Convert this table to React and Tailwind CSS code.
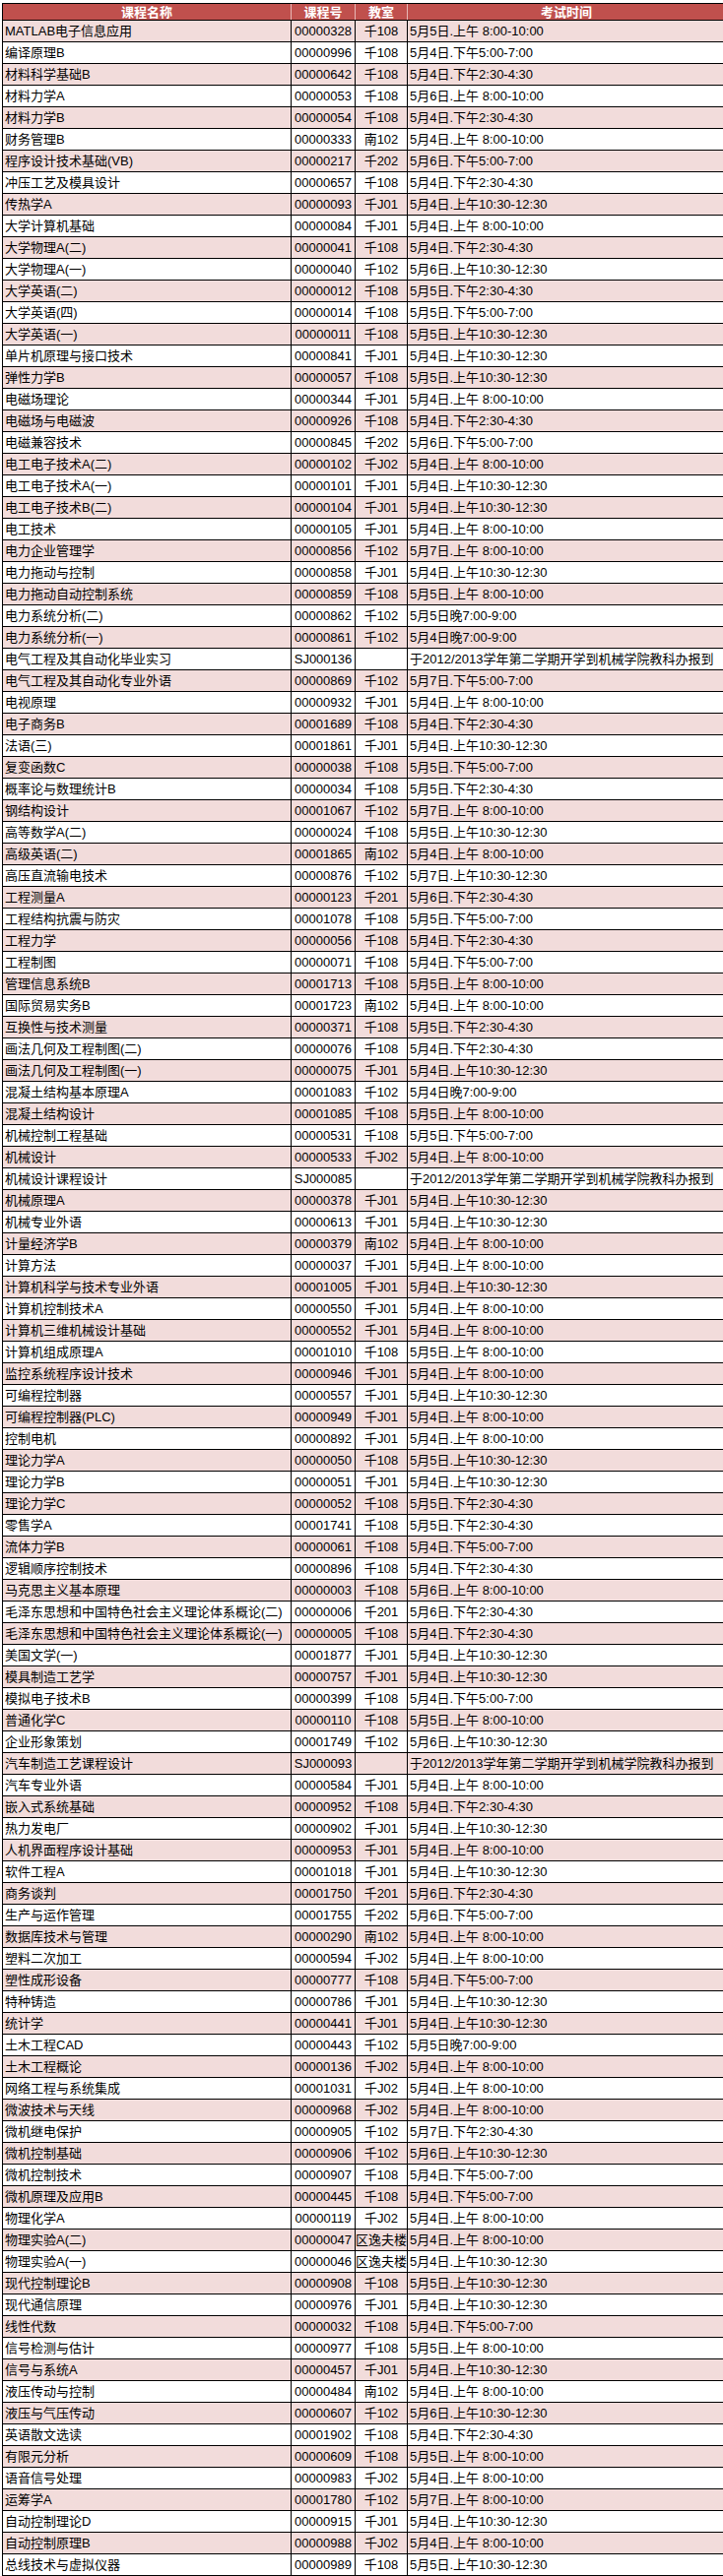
import React from 'react';

// [name, code, room, time]
const rows = [
    ['MATLAB电子信息应用', '00000328', '千108', '5月5日.上午 8:00-10:00'],
    ['编译原理B', '00000996', '千108', '5月4日.下午5:00-7:00'],
    ['材料科学基础B', '00000642', '千108', '5月4日.下午2:30-4:30'],
    ['材料力学A', '00000053', '千108', '5月6日.上午 8:00-10:00'],
    ['材料力学B', '00000054', '千108', '5月4日.下午2:30-4:30'],
    ['财务管理B', '00000333', '南102', '5月4日.上午 8:00-10:00'],
    ['程序设计技术基础(VB)', '00000217', '千202', '5月6日.下午5:00-7:00'],
    ['冲压工艺及模具设计', '00000657', '千108', '5月4日.下午2:30-4:30'],
    ['传热学A', '00000093', '千J01', '5月4日.上午10:30-12:30'],
    ['大学计算机基础', '00000084', '千J01', '5月4日.上午 8:00-10:00'],
    ['大学物理A(二)', '00000041', '千108', '5月4日.下午2:30-4:30'],
    ['大学物理A(一)', '00000040', '千102', '5月6日.上午10:30-12:30'],
    ['大学英语(二)', '00000012', '千108', '5月5日.下午2:30-4:30'],
    ['大学英语(四)', '00000014', '千108', '5月5日.下午5:00-7:00'],
    ['大学英语(一)', '00000011', '千108', '5月5日.上午10:30-12:30'],
    ['单片机原理与接口技术', '00000841', '千J01', '5月4日.上午10:30-12:30'],
    ['弹性力学B', '00000057', '千108', '5月5日.上午10:30-12:30'],
    ['电磁场理论', '00000344', '千J01', '5月4日.上午 8:00-10:00'],
    ['电磁场与电磁波', '00000926', '千108', '5月4日.下午2:30-4:30'],
    ['电磁兼容技术', '00000845', '千202', '5月6日.下午5:00-7:00'],
    ['电工电子技术A(二)', '00000102', '千J02', '5月4日.上午 8:00-10:00'],
    ['电工电子技术A(一)', '00000101', '千J01', '5月4日.上午10:30-12:30'],
    ['电工电子技术B(二)', '00000104', '千J01', '5月4日.上午10:30-12:30'],
    ['电工技术', '00000105', '千J01', '5月4日.上午 8:00-10:00'],
    ['电力企业管理学', '00000856', '千102', '5月7日.上午 8:00-10:00'],
    ['电力拖动与控制', '00000858', '千J01', '5月4日.上午10:30-12:30'],
    ['电力拖动自动控制系统', '00000859', '千108', '5月5日.上午 8:00-10:00'],
    ['电力系统分析(二)', '00000862', '千102', '5月5日晚7:00-9:00'],
    ['电力系统分析(一)', '00000861', '千102', '5月4日晚7:00-9:00'],
    ['电气工程及其自动化毕业实习', 'SJ000136', '', '于2012/2013学年第二学期开学到机械学院教科办报到'],
    ['电气工程及其自动化专业外语', '00000869', '千102', '5月7日.下午5:00-7:00'],
    ['电视原理', '00000932', '千J01', '5月4日.上午 8:00-10:00'],
    ['电子商务B', '00001689', '千108', '5月4日.下午2:30-4:30'],
    ['法语(三)', '00001861', '千J01', '5月4日.上午10:30-12:30'],
    ['复变函数C', '00000038', '千108', '5月5日.下午5:00-7:00'],
    ['概率论与数理统计B', '00000034', '千108', '5月5日.下午2:30-4:30'],
    ['钢结构设计', '00001067', '千102', '5月7日.上午 8:00-10:00'],
    ['高等数学A(二)', '00000024', '千108', '5月5日.上午10:30-12:30'],
    ['高级英语(二)', '00001865', '南102', '5月4日.上午 8:00-10:00'],
    ['高压直流输电技术', '00000876', '千102', '5月7日.上午10:30-12:30'],
    ['工程测量A', '00000123', '千201', '5月6日.下午2:30-4:30'],
    ['工程结构抗震与防灾', '00001078', '千108', '5月5日.下午5:00-7:00'],
    ['工程力学', '00000056', '千108', '5月4日.下午2:30-4:30'],
    ['工程制图', '00000071', '千108', '5月4日.下午5:00-7:00'],
    ['管理信息系统B', '00001713', '千108', '5月5日.上午 8:00-10:00'],
    ['国际贸易实务B', '00001723', '南102', '5月4日.上午 8:00-10:00'],
    ['互换性与技术测量', '00000371', '千108', '5月5日.下午2:30-4:30'],
    ['画法几何及工程制图(二)', '00000076', '千108', '5月4日.下午2:30-4:30'],
    ['画法几何及工程制图(一)', '00000075', '千J01', '5月4日.上午10:30-12:30'],
    ['混凝土结构基本原理A', '00001083', '千102', '5月4日晚7:00-9:00'],
    ['混凝土结构设计', '00001085', '千108', '5月5日.上午 8:00-10:00'],
    ['机械控制工程基础', '00000531', '千108', '5月5日.下午5:00-7:00'],
    ['机械设计', '00000533', '千J02', '5月4日.上午 8:00-10:00'],
    ['机械设计课程设计', 'SJ000085', '', '于2012/2013学年第二学期开学到机械学院教科办报到'],
    ['机械原理A', '00000378', '千J01', '5月4日.上午10:30-12:30'],
    ['机械专业外语', '00000613', '千J01', '5月4日.上午10:30-12:30'],
    ['计量经济学B', '00000379', '南102', '5月4日.上午 8:00-10:00'],
    ['计算方法', '00000037', '千J01', '5月4日.上午 8:00-10:00'],
    ['计算机科学与技术专业外语', '00001005', '千J01', '5月4日.上午10:30-12:30'],
    ['计算机控制技术A', '00000550', '千J01', '5月4日.上午 8:00-10:00'],
    ['计算机三维机械设计基础', '00000552', '千J01', '5月4日.上午 8:00-10:00'],
    ['计算机组成原理A', '00001010', '千108', '5月5日.上午 8:00-10:00'],
    ['监控系统程序设计技术', '00000946', '千J01', '5月4日.上午 8:00-10:00'],
    ['可编程控制器', '00000557', '千J01', '5月4日.上午10:30-12:30'],
    ['可编程控制器(PLC)', '00000949', '千J01', '5月4日.上午 8:00-10:00'],
    ['控制电机', '00000892', '千J01', '5月4日.上午 8:00-10:00'],
    ['理论力学A', '00000050', '千108', '5月5日.上午10:30-12:30'],
    ['理论力学B', '00000051', '千J01', '5月4日.上午10:30-12:30'],
    ['理论力学C', '00000052', '千108', '5月5日.下午2:30-4:30'],
    ['零售学A', '00001741', '千108', '5月5日.下午2:30-4:30'],
    ['流体力学B', '00000061', '千108', '5月4日.下午5:00-7:00'],
    ['逻辑顺序控制技术', '00000896', '千108', '5月4日.下午2:30-4:30'],
    ['马克思主义基本原理', '00000003', '千108', '5月6日.上午 8:00-10:00'],
    ['毛泽东思想和中国特色社会主义理论体系概论(二)', '00000006', '千201', '5月6日.下午2:30-4:30'],
    ['毛泽东思想和中国特色社会主义理论体系概论(一)', '00000005', '千108', '5月4日.下午2:30-4:30'],
    ['美国文学(一)', '00001877', '千J01', '5月4日.上午10:30-12:30'],
    ['模具制造工艺学', '00000757', '千J01', '5月4日.上午10:30-12:30'],
    ['模拟电子技术B', '00000399', '千108', '5月4日.下午5:00-7:00'],
    ['普通化学C', '00000110', '千108', '5月5日.上午 8:00-10:00'],
    ['企业形象策划', '00001749', '千102', '5月6日.上午10:30-12:30'],
    ['汽车制造工艺课程设计', 'SJ000093', '', '于2012/2013学年第二学期开学到机械学院教科办报到'],
    ['汽车专业外语', '00000584', '千J01', '5月4日.上午 8:00-10:00'],
    ['嵌入式系统基础', '00000952', '千108', '5月4日.下午2:30-4:30'],
    ['热力发电厂', '00000902', '千J01', '5月4日.上午10:30-12:30'],
    ['人机界面程序设计基础', '00000953', '千J01', '5月4日.上午 8:00-10:00'],
    ['软件工程A', '00001018', '千J01', '5月4日.上午10:30-12:30'],
    ['商务谈判', '00001750', '千201', '5月6日.下午2:30-4:30'],
    ['生产与运作管理', '00001755', '千202', '5月6日.下午5:00-7:00'],
    ['数据库技术与管理', '00000290', '南102', '5月4日.上午 8:00-10:00'],
    ['塑料二次加工', '00000594', '千J02', '5月4日.上午 8:00-10:00'],
    ['塑性成形设备', '00000777', '千108', '5月4日.下午5:00-7:00'],
    ['特种铸造', '00000786', '千J01', '5月4日.上午10:30-12:30'],
    ['统计学', '00000441', '千J01', '5月4日.上午10:30-12:30'],
    ['土木工程CAD', '00000443', '千102', '5月5日晚7:00-9:00'],
    ['土木工程概论', '00000136', '千J02', '5月4日.上午 8:00-10:00'],
    ['网络工程与系统集成', '00001031', '千J02', '5月4日.上午 8:00-10:00'],
    ['微波技术与天线', '00000968', '千J02', '5月4日.上午 8:00-10:00'],
    ['微机继电保护', '00000905', '千102', '5月7日.下午2:30-4:30'],
    ['微机控制基础', '00000906', '千102', '5月6日.上午10:30-12:30'],
    ['微机控制技术', '00000907', '千108', '5月4日.下午5:00-7:00'],
    ['微机原理及应用B', '00000445', '千108', '5月4日.下午5:00-7:00'],
    ['物理化学A', '00000119', '千J02', '5月4日.上午 8:00-10:00'],
    ['物理实验A(二)', '00000047', '区逸夫楼501', '5月4日.上午 8:00-10:00'],
    ['物理实验A(一)', '00000046', '区逸夫楼501', '5月4日.上午10:30-12:30'],
    ['现代控制理论B', '00000908', '千108', '5月5日.上午10:30-12:30'],
    ['现代通信原理', '00000976', '千J01', '5月4日.上午10:30-12:30'],
    ['线性代数', '00000032', '千108', '5月4日.下午5:00-7:00'],
    ['信号检测与估计', '00000977', '千108', '5月5日.上午 8:00-10:00'],
    ['信号与系统A', '00000457', '千J01', '5月4日.上午10:30-12:30'],
    ['液压传动与控制', '00000484', '南102', '5月4日.上午 8:00-10:00'],
    ['液压与气压传动', '00000607', '千102', '5月6日.上午10:30-12:30'],
    ['英语散文选读', '00001902', '千108', '5月4日.下午2:30-4:30'],
    ['有限元分析', '00000609', '千108', '5月5日.上午 8:00-10:00'],
    ['语音信号处理', '00000983', '千J02', '5月4日.上午 8:00-10:00'],
    ['运筹学A', '00001780', '千102', '5月7日.上午 8:00-10:00'],
    ['自动控制理论D', '00000915', '千J01', '5月4日.上午10:30-12:30'],
    ['自动控制原理B', '00000988', '千J02', '5月4日.上午 8:00-10:00'],
    ['总线技术与虚拟仪器', '00000989', '千108', '5月5日.上午10:30-12:30'],
];

export default function App() {
    return (
        <div className="w-[734px] overflow-hidden bg-white pt-[3px] text-[13px] leading-none text-black [font-family:'Liberation_Sans','Noto_Sans_CJK_SC',sans-serif]">
            <div className="ml-[2px] w-[760px] border-l border-t border-black">
                {/* header */}
                <div className="flex h-[17px] border-b border-black bg-[#C0504D] font-bold text-white">
                    <div className="flex w-[293px] shrink-0 items-center justify-center border-r border-[#e8b8b6]">课程名称</div>
                    <div className="flex w-[65px] shrink-0 items-center justify-center border-r border-[#e8b8b6]">课程号</div>
                    <div className="flex w-[53px] shrink-0 items-center justify-center border-r border-[#e8b8b6]">教室</div>
                    <div className="flex flex-1 items-center justify-center pr-[26px]">考试时间</div>
                </div>
                {rows.map((r, i) => {
                    const clipped = r[2].startsWith('区');
                    return (
                        <div
                            key={i}
                            className={`flex h-[22px] border-b border-black ${i % 2 === 0 ? 'bg-[#F2DCDB]' : 'bg-white'}`}
                        >
                            <div className="flex w-[293px] shrink-0 items-center overflow-hidden whitespace-nowrap border-r border-black pl-[2px]">
                                {r[0]}
                            </div>
                            <div className="flex w-[65px] shrink-0 items-center justify-center overflow-hidden whitespace-nowrap border-r border-black">
                                {r[1]}
                            </div>
                            <div
                                className={`flex w-[53px] shrink-0 items-center overflow-hidden whitespace-nowrap border-r border-black ${clipped ? 'justify-start' : 'justify-center'}`}
                            >
                                {r[2]}
                            </div>
                            <div className="flex flex-1 items-center overflow-hidden whitespace-nowrap pl-[2px]">
                                {r[3]}
                            </div>
                        </div>
                    );
                })}
            </div>
        </div>
    );
}
